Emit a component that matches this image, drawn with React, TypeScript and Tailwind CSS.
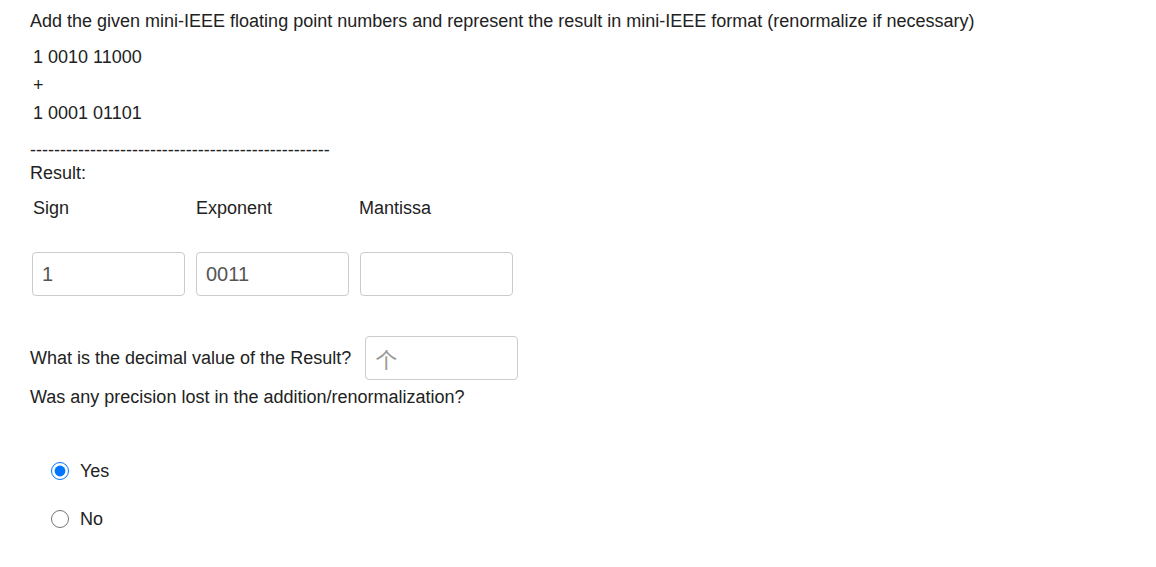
export default function App() {
  const box = "h-[44px] w-[153px] rounded-[4px] border border-[#ccc] px-[9px] text-[20px] outline-none";
  return (
    <div className="min-h-screen bg-white px-[30px] pt-[10px] text-[18px] leading-[22px] text-[#222]" style={{ fontFamily: '"Liberation Sans", Arial, "Noto Sans CJK SC", sans-serif' }}>
      <p>Add the given mini-IEEE floating point numbers and represent the result in mini-IEEE format (renormalize if necessary)</p>
      <div className="mt-[14px] pl-[3px]">1 0010 11000</div>
      <div className="mt-[6px] pl-[3px]">+</div>
      <div className="mt-[6px] pl-[3px]">1 0001 01101</div>
      <div className="mt-[19px] leading-[14px]">--------------------------------------------------</div>
      <div className="mt-[5px]">Result:</div>
      <div className="mt-[13px] flex pl-[3px]">
        <span className="w-[163px]">Sign</span>
        <span className="w-[163px]">Exponent</span>
        <span>Mantissa</span>
      </div>
      <div className="mt-[33px] flex gap-[11px] pl-[2px]">
        <input readOnly value="1" className={`${box} text-[#555]`} />
        <input readOnly value="0011" className={`${box} text-[#555]`} />
        <input readOnly value="" className={`${box} text-[#555]`} />
      </div>
      <div className="mt-[40px] flex items-center gap-[14px]">
        <span>What is the decimal value of the Result?</span>
        <input readOnly value="个" className="h-[44px] w-[153px] rounded-[4px] border border-[#ccc] px-[9px] text-[22px] text-[#999] outline-none" style={{ fontFamily: '"Noto Sans CJK SC", sans-serif' }} />
      </div>
      <div className="mt-[6px]">Was any precision lost in the addition/renormalization?</div>
      <div className="mt-[52px] flex flex-col gap-[26px] pl-[21px]">
        <label className="flex items-center gap-[11px]">
          <input type="radio" name="lost" defaultChecked className="m-0 h-[18px] w-[18px] accent-[#0075ff]" />
          <span>Yes</span>
        </label>
        <label className="flex items-center gap-[11px]">
          <input type="radio" name="lost" className="m-0 h-[18px] w-[18px]" />
          <span>No</span>
        </label>
      </div>
    </div>
  );
}
